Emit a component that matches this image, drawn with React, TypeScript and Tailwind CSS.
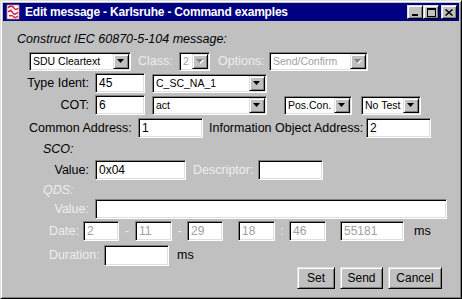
import React from "react"

const sunken =
  "border border-t-[#808080] border-l-[#808080] border-b-white border-r-white shadow-[inset_1px_1px_0_#000,inset_-1px_-1px_0_#dfdfdf]"
const raised =
  "border border-t-[#dfdfdf] border-l-[#dfdfdf] border-b-black border-r-black shadow-[inset_1px_1px_0_#fff,inset_-1px_-1px_0_#808080]"

const font = "font-['Liberation_Sans',Arial,sans-serif]"

function Field({ className = "", value = "", disabled = false }: { className?: string; value?: string; disabled?: boolean }) {
  return (
    <div
      className={`${sunken} ${className} h-full bg-white flex items-center pl-[3px] text-[12px] leading-none ${
        disabled ? "text-[#a0a0a0]" : "text-black"
      }`}
    >
      {value}
    </div>
  )
}

function Arrow({ disabled = false }: { disabled?: boolean }) {
  return (
    <div className={`${raised} w-[16px] h-full bg-[#c0c0c0] flex items-center justify-center`}>
      <svg width="8" height="5" viewBox="0 0 8 5">
        {disabled && <path d="M1 1h7L4.5 5z" fill="#fff" />}
        <path d="M0 0h7L3.5 4z" fill={disabled ? "#808080" : "#000"} />
      </svg>
    </div>
  )
}

function Combo({ className = "", value, disabled = false }: { className?: string; value: string; disabled?: boolean }) {
  return (
    <div className={`${sunken} ${className} h-full bg-white flex items-stretch p-[1px]`}>
      <div
        className={`flex-1 flex items-center pl-[2px] text-[10.5px] leading-none overflow-hidden whitespace-nowrap ${
          disabled ? "text-[#a0a0a0]" : "text-black"
        }`}
      >
        {value}
      </div>
      <Arrow disabled={disabled} />
    </div>
  )
}

function Label({ className = "", children, disabled = false }: { className?: string; children: React.ReactNode; disabled?: boolean }) {
  return (
    <div
      className={`${className} shrink-0 text-[12.5px] leading-none whitespace-nowrap ${
        disabled ? "text-[#eeeeee]" : "text-black"
      }`}
    >
      {children}
    </div>
  )
}

function Btn({ className = "", children }: { className?: string; children: React.ReactNode }) {
  return (
    <button
      className={`${raised} ${className} h-full bg-[#c0c0c0] text-[12px] text-black flex items-center justify-center leading-none`}
    >
      {children}
    </button>
  )
}

function TitleButton({ children, className = "" }: { children: React.ReactNode; className?: string }) {
  return (
    <div className={`${raised} ${className} w-[16px] h-[14px] bg-[#c0c0c0] flex items-center justify-center`}>
      {children}
    </div>
  )
}

export default function App() {
  return (
    <div className={`${font} w-[462px] h-[299px] bg-[#c0c0c0] border border-t-[#dfdfdf] border-l-[#dfdfdf] border-b-black border-r-black shadow-[inset_1px_1px_0_#fff,inset_-1px_-1px_0_#808080] p-[2px] flex flex-col select-none`}>
      {/* Title bar */}
      <div className="h-[18px] bg-[#000080] flex items-center pl-[2px] pr-[2px]">
        <svg width="16" height="16" viewBox="0 0 16 16" className="shrink-0">
          <rect x="2" y="1" width="12" height="14" fill="#fff" />
          <path d="M3 4c2-3 5-2 6 0s3 2 4 0M3 8c2-2 4-1 5 1s4 1 5-1M4 12c2-1 4 0 5 1s3 0 4-1" stroke="#e0203a" strokeWidth="1.6" fill="none" />
          <path d="M5 6h2M9 10h2" stroke="#6060c0" strokeWidth="1.2" />
          <rect x="2" y="1" width="12" height="14" fill="none" stroke="#c08090" strokeWidth="0.8" />
        </svg>
        <div className="ml-[4px] flex-1 text-white font-bold text-[12px] tracking-[-0.2px] leading-none whitespace-nowrap">
          Edit message - Karlsruhe - Command examples
        </div>
        <TitleButton>
          <svg width="8" height="9" viewBox="0 0 8 9" className="mt-[1px]">
            <rect x="1" y="6" width="6" height="2" fill="#000" />
          </svg>
        </TitleButton>
        <TitleButton>
          <svg width="9" height="9" viewBox="0 0 9 9">
            <rect x="0.5" y="0.5" width="8" height="8" fill="none" stroke="#000" />
            <rect x="0" y="0" width="9" height="2" fill="#000" />
          </svg>
        </TitleButton>
        <TitleButton className="ml-[2px]">
          <svg width="8" height="7" viewBox="0 0 8 7">
            <path d="M0.5 0.5l7 6M7.5 0.5l-7 6" stroke="#000" strokeWidth="1.5" />
          </svg>
        </TitleButton>
      </div>

      {/* Construct header */}
      <div className="mt-[10px] h-[16px] pl-[14px] flex items-center">
        <Label className="italic text-[#202020]">Construct IEC 60870-5-104 message:</Label>
      </div>

      {/* Row 1 */}
      <div className="mt-[5px] h-[19px] pl-[26px] flex items-center">
        <Combo className="w-[102px]" value="SDU Cleartext" />
        <Label disabled className="ml-[7px] w-[41px]">Class:</Label>
        <Combo disabled className="w-[31px]" value="2" />
        <Label disabled className="ml-[8px] w-[51px]">Options:</Label>
        <Combo disabled className="w-[99px]" value="Send/Confirm" />
      </div>

      {/* Type Ident */}
      <div className="mt-[2px] h-[20px] flex items-center">
        <Label className="w-[86px] text-right">Type Ident:</Label>
        <Field className="ml-[6px] w-[50px]" value="45" />
        <div className="ml-[7px] h-[19px]">
          <Combo className="w-[115px]" value="C_SC_NA_1" />
        </div>
      </div>

      {/* COT */}
      <div className="mt-[2px] h-[20px] flex items-center">
        <Label className="w-[86px] text-right">COT:</Label>
        <Field className="ml-[6px] w-[50px]" value="6" />
        <div className="ml-[7px] h-[19px]">
          <Combo className="w-[115px]" value="act" />
        </div>
        <div className="ml-[17px] h-[19px] self-end">
          <Combo className="w-[68px]" value="Pos.Con." />
        </div>
        <div className="ml-[9px] h-[19px] self-end">
          <Combo className="w-[60px]" value="No Test" />
        </div>
      </div>

      {/* Addresses */}
      <div className="mt-[3px] h-[20px] pl-[26px] flex items-center">
        <Label className="w-[109px]">Common Address:</Label>
        <Field className="w-[65px]" value="1" />
        <Label className="ml-[6px] w-[157px]">Information Object Address:</Label>
        <Field className="w-[65px]" value="2" />
      </div>

      {/* SCO */}
      <div className="mt-[4px] h-[14px] pl-[40px] flex items-center">
        <Label className="italic">SCO:</Label>
      </div>

      <div className="mt-[4px] h-[20px] flex items-center">
        <Label className="w-[86px] text-right">Value:</Label>
        <Field className="ml-[6px] w-[91px]" value="0x04" />
        <Label disabled className="ml-[7px] w-[65px]">Descriptor:</Label>
        <Field className="w-[65px]" />
      </div>

      {/* QDS */}
      <div className="mt-[3px] h-[14px] pl-[40px] flex items-center">
        <Label disabled className="italic">QDS:</Label>
      </div>

      <div className="mt-[2px] h-[20px] flex items-center">
        <Label disabled className="w-[86px] text-right">Value:</Label>
        <Field disabled className="ml-[6px] w-[352px]" />
      </div>

      <div className="mt-[2px] h-[20px] pl-[46px] flex items-center">
        <Label disabled className="w-[34px]">Date:</Label>
        <Field disabled className="w-[36px]" value="2" />
        <Label disabled className="w-[16px] text-center">-</Label>
        <Field disabled className="w-[37px]" value="11" />
        <Label disabled className="w-[15px] text-center">-</Label>
        <Field disabled className="w-[36px]" value="29" />
        <Field disabled className="ml-[15px] w-[37px]" value="18" />
        <Label disabled className="w-[14px] text-center">:</Label>
        <Field disabled className="w-[37px]" value="46" />
        <Field disabled className="ml-[14px] w-[64px]" value="55181" />
        <Label className="ml-[10px]">ms</Label>
      </div>

      <div className="mt-[4px] h-[21px] pl-[46px] flex items-center">
        <Label disabled className="w-[55px]">Duration:</Label>
        <Field className="w-[65px]" />
        <Label className="ml-[8px]">ms</Label>
      </div>

      {/* Buttons */}
      <div className="mt-[1px] h-[22px] pl-[294px] flex items-center">
        <Btn className="w-[38px]">Set</Btn>
        <Btn className="ml-[5px] w-[43px]">Send</Btn>
        <Btn className="ml-[5px] w-[54px]">Cancel</Btn>
      </div>
    </div>
  )
}
